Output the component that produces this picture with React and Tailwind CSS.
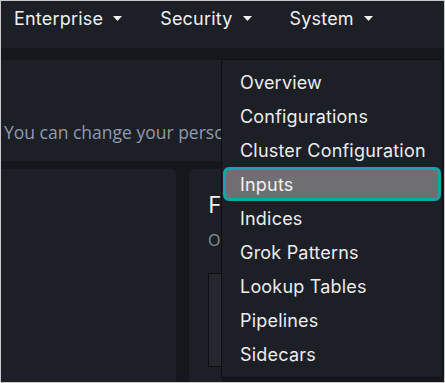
import React from "react";

const navItems = ["Enterprise", "Security", "System"];

const menuItems = [
  "Overview",
  "Configurations",
  "Cluster Configuration",
  "Inputs",
  "Indices",
  "Grok Patterns",
  "Lookup Tables",
  "Pipelines",
  "Sidecars",
];

const Caret = () => (
  <svg width="9" height="5" viewBox="0 0 9 5" className="ml-[10px] mt-[1px]">
    <path d="M0 0h9L4.5 5z" fill="#f2f2f2" />
  </svg>
);

const App = () => {
  return (
    <div
      className="relative w-[445px] h-[383px] overflow-hidden border border-[#c9c9c9] bg-[#14171c]"
      style={{ fontFamily: "Inter, 'Noto Sans', sans-serif" }}
    >
      {/* top navigation */}
      <div className="h-[47px] bg-[#1c1f26] flex items-start pl-[13px] pt-[5px] gap-[38px]">
        {navItems.map((item) => (
          <div key={item} className="flex items-center h-[24px] text-[18px] tracking-[0.2px] text-[#f0f0f0]">
            {item}
            <Caret />
          </div>
        ))}
      </div>

      <div className="h-[12px] bg-[#14171c]" />

      {/* page header, cut off by the open menu */}
      <div className="w-[221px] overflow-hidden h-[101px] bg-[#1c1f26] flex items-end pb-[16px] pl-[3px]">
        <p
          className="text-[17.5px] text-[#8e9bb0] whitespace-nowrap"
          style={{ fontFamily: "'Open Sans', sans-serif" }}
        >
          You can change your personal preferences here.
        </p>
      </div>

      {/* panels */}
      <div className="w-[221px] overflow-hidden flex gap-[13px] pt-[8px]">
        <div className="w-[175px] h-[220px] bg-[#1c1f26] rounded-tr-[6px] shrink-0" />
        <div className="w-[240px] shrink-0 h-[220px] bg-[#1c1f26] rounded-tl-[6px] pl-[19px] pt-[20px]">
          <h2 className="text-[24px] leading-[30px] text-[#f5f5f5] whitespace-nowrap" style={{ fontFamily: "'Open Sans', sans-serif" }}>
            Frontend
          </h2>
          <p className="mt-[9px] text-[16px] text-[#8d8f95] whitespace-nowrap" style={{ fontFamily: "'Open Sans', sans-serif" }}>
            Options
          </p>
          <div className="mt-[21px] h-[94px] w-[200px] bg-[#25282f] border border-[#0e1014]" />
        </div>
      </div>

      {/* System dropdown */}
      <div className="absolute left-[220px] top-[58px] right-[1px] bottom-[4px] bg-[#1c1f26] border border-[#0e1014] pt-[5px] px-[1px]">
        {menuItems.map((item) =>
          item === "Inputs" ? (
            <div
              key={item}
              className="h-[34px] flex items-center pl-[14px] rounded-[6px] border-[3px] border-[#0fa7a6] bg-[#6f6f73] text-[18px] tracking-[0.2px] text-[#f2f2f2]"
            >
              {item}
            </div>
          ) : (
            <div key={item} className="h-[34px] flex items-center pl-[17px] text-[18px] tracking-[0.2px] text-[#ededed]">
              {item}
            </div>
          )
        )}
      </div>
    </div>
  );
};

export default App;
